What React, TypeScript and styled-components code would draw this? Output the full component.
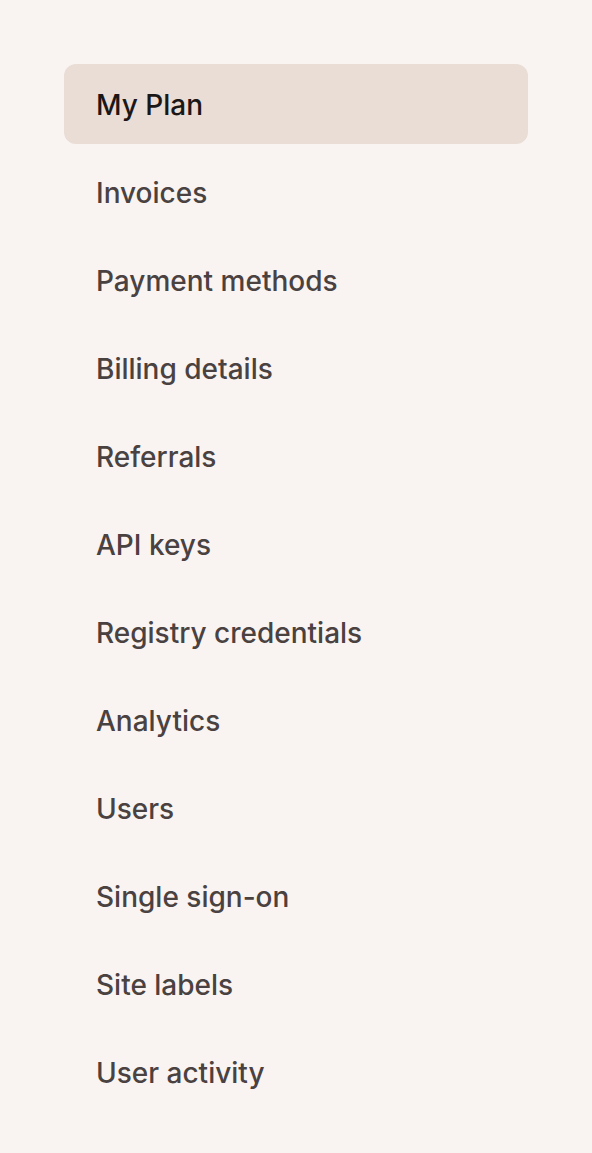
import React from "react";
import styled, { createGlobalStyle } from "styled-components";

const Global = createGlobalStyle`
  html, body { margin: 0; padding: 0; background: #f9f4f1; }
  body { font-family: Inter, "Noto Sans", sans-serif; }
`;

const Nav = styled.nav`
  display: flex;
  flex-direction: column;
  gap: 8px;
  padding: 64px;
  box-sizing: border-box;
  width: 592px;
  min-height: 1153px;
`;

const Item = styled.a<{ $active?: boolean }>`
  display: flex;
  align-items: center;
  height: 80px;
  padding: 1px 32px 0;
  box-sizing: border-box;
  border-radius: 12px;
  font-size: 28px;
  font-weight: 500;
  letter-spacing: 0;
  text-decoration: none;
  cursor: pointer;
  color: ${(p) => (p.$active ? "#1c1717" : "#4a4141")};
  background: ${(p) => (p.$active ? "#e9ddd5" : "transparent")};
`;

const items = [
  "My Plan",
  "Invoices",
  "Payment methods",
  "Billing details",
  "Referrals",
  "API keys",
  "Registry credentials",
  "Analytics",
  "Users",
  "Single sign-on",
  "Site labels",
  "User activity",
];

export default function App() {
  return (
    <>
      <Global />
      <Nav>
        {items.map((label, i) => (
          <Item key={label} $active={i === 0}>
            {label}
          </Item>
        ))}
      </Nav>
    </>
  );
}
